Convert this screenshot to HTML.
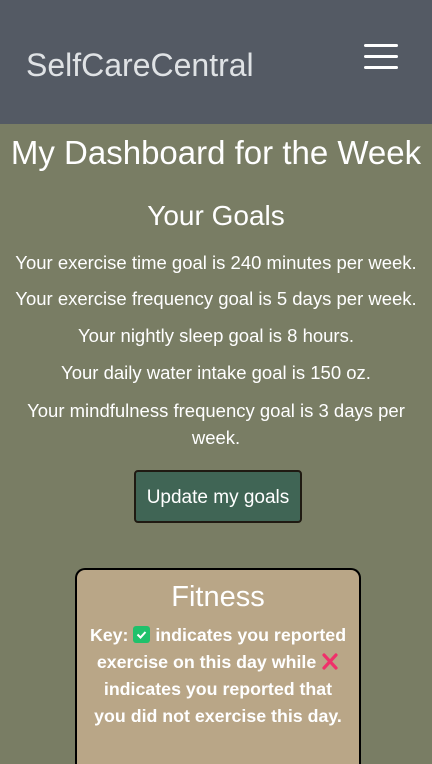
<!DOCTYPE html>
<html><head><style>
html,body{margin:0;width:432px;height:764px;overflow:hidden}
body{background:#797d64;font-family:"Liberation Sans",sans-serif;color:#fff;position:relative}
.hd{height:124px;background:#545a64;position:relative}
.logo{position:absolute;left:26px;top:47px;font-size:32px;color:#dfe2e5}
.bars{position:absolute;left:364px;top:44px;width:34px}
.bars div{height:3px;background:#fff;border-radius:2px;margin-bottom:8px}
h1{margin:0;position:absolute;top:134px;width:432px;text-align:center;font-weight:normal;font-size:33px}
h2{margin:0;position:absolute;top:200px;width:432px;text-align:center;font-weight:normal;font-size:28px}
p{margin:0;position:absolute;width:432px;text-align:center;font-size:18.5px;line-height:27px}
.btn{position:absolute;left:134px;top:470px;background:#406555;border:2px solid #1f1a12;border-radius:4px;box-sizing:border-box;width:168px;height:53px;text-align:center;line-height:51px;font-size:19px}
.card{position:absolute;left:75px;top:568px;width:286px;height:196px;background:#b9a687;border:2px solid #000;border-bottom:none;border-radius:10px 10px 0 0;box-sizing:border-box;text-align:center}
.card h3{margin:10px 0 0;font-weight:normal;font-size:29px;line-height:34px}
.card .k{font-weight:bold;font-size:17.8px;line-height:27px;margin-top:8px}
.ck{display:inline-block;width:17px;height:17px;background:#1fc16b;border-radius:3px;vertical-align:-2px;position:relative}
</style></head><body>
<div class="hd"><div class="logo">SelfCareCentral</div><div class="bars"><div></div><div></div><div></div></div></div>
<h1>My Dashboard for the Week</h1>
<h2>Your Goals</h2>
<p style="top:249px">Your exercise time goal is 240 minutes per week.</p>
<p style="top:285px">Your exercise frequency goal is 5 days per week.</p>
<p style="top:322px">Your nightly sleep goal is 8 hours.</p>
<p style="top:359px">Your daily water intake goal is 150 oz.</p>
<p style="top:397px;left:12px;width:408px">Your mindfulness frequency goal is 3 days per week.</p>
<div class="btn">Update my goals</div>
<div class="card"><h3>Fitness</h3>
<div class="k">Key: <span class="ck"><svg width="17" height="17" viewBox="0 0 17 17" style="position:absolute;left:0;top:0"><path d="M4.5 8.5l3 3 5-5.5" stroke="#fff" stroke-width="2" fill="none"/></svg></span> indicates you reported exercise on this day while <svg width="18" height="17" viewBox="0 0 18 17" style="vertical-align:-2px"><path d="M3 2l12 13M15 2L3 15" stroke="#f0306a" stroke-width="3.2" stroke-linecap="round"/></svg><br>indicates you reported that<br>you did not exercise this day.</div></div>
</body></html>
